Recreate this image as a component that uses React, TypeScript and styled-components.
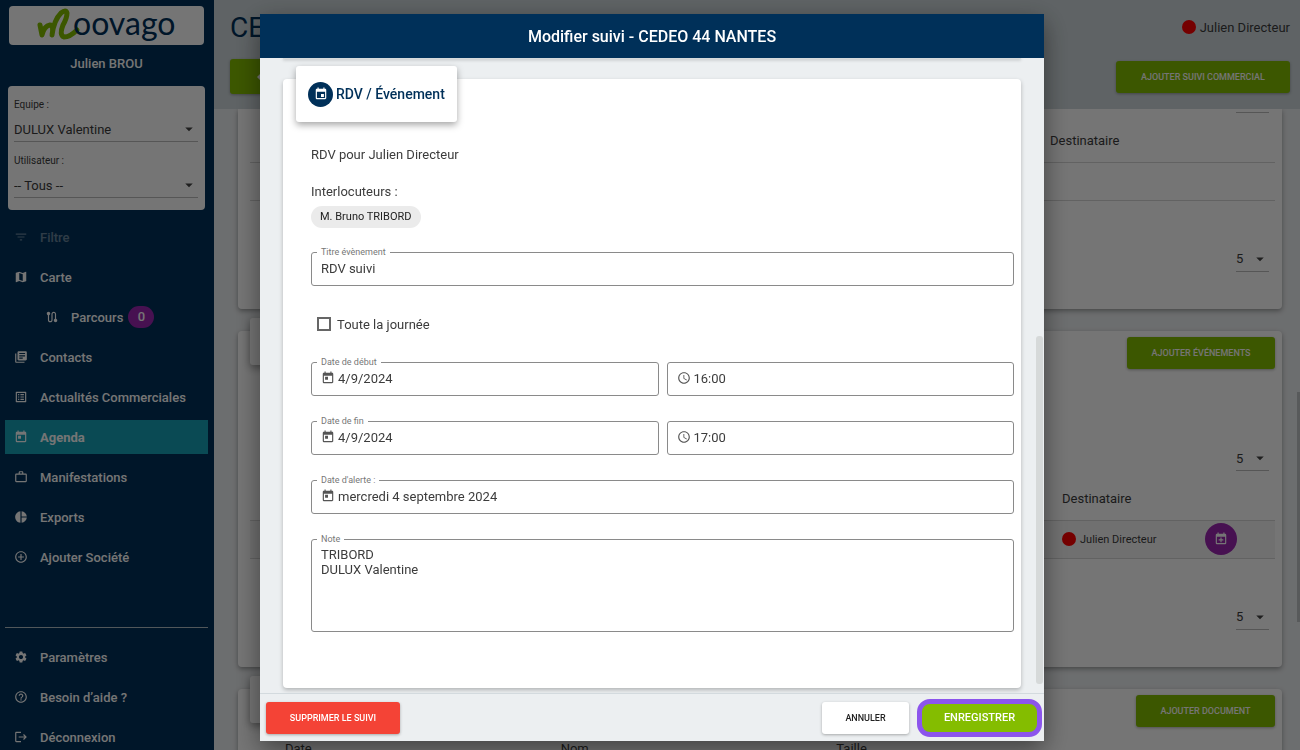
import React from 'react';
import styled, { createGlobalStyle } from 'styled-components';
import {
  MdAddCircleOutline,
  MdArrowBack,
  MdArrowDropDown,
  MdEvent,
  MdFilterList,
  MdHelpOutline,
  MdLibraryBooks,
  MdListAlt,
  MdLogout,
  MdMap,
  MdPieChart,
  MdRoute,
  MdSchedule,
  MdSettings,
  MdToday,
  MdWorkOutline,
} from 'react-icons/md';

const navy = '#003059';
const green = '#84bd00';
const surface = '#eceff1';

const GlobalStyle = createGlobalStyle`
  *, *::before, *::after { box-sizing: border-box; }
  body { margin: 0; }
  body, button, input, select, textarea {
    font-family: Roboto, 'Liberation Sans', sans-serif;
    font-size: 13px;
    color: #3c3c3c;
  }
`;

const Page = styled.div`
  display: flex;
  height: 100vh;
  overflow: hidden;
  background: ${surface};
`;

/* ---------- Sidebar ---------- */

const Sidebar = styled.aside`
  flex: 0 0 214px;
  display: flex;
  flex-direction: column;
  padding: 6px 6px 0 5px;
  background: ${navy};
  overflow: hidden;
`;

const LogoCard = styled.div`
  flex: none;
  display: flex;
  justify-content: center;
  height: 39px;
  margin: 0 4px;
  border-radius: 4px;
  background: #fff;
`;

const LogoDrawing = styled.svg`
  overflow: visible;
`;

const UserName = styled.div`
  flex: none;
  padding: 8px 0 12px;
  line-height: 21px;
  text-align: center;
  font-weight: 500;
  color: #fff;
`;

const FilterCard = styled.div`
  flex: none;
  height: 124px;
  margin: 0 3px 10px;
  padding: 11px 7px 0 6px;
  border-radius: 4px;
  background: #fff;
`;

const FilterLabel = styled.label`
  display: block;
  height: 16px;
  line-height: 16px;
  font-size: 10px;
`;

const SelectBox = styled.div<{ $gap?: number }>`
  position: relative;
  display: flex;
  align-items: center;
  height: 29px;
  padding-top: 4px;
  margin-bottom: ${(p) => p.$gap ?? 0}px;
  border-bottom: 1px solid #bbb;
  svg {
    position: absolute;
    right: 0;
    width: 18px;
    height: 18px;
    color: #444;
    pointer-events: none;
  }
`;

const Select = styled.select`
  width: 100%;
  padding: 0;
  border: 0;
  background: transparent;
  appearance: none;
  outline: none;
`;

const Nav = styled.nav`
  flex: none;
  display: flex;
  flex-direction: column;
  gap: 6px;
`;

const NavItem = styled.a<{ $active?: boolean; $muted?: boolean; $nested?: boolean }>`
  display: flex;
  align-items: center;
  gap: 12px;
  height: 34px;
  padding-left: ${(p) => (p.$nested ? 40 : 9)}px;
  background: ${(p) => (p.$active ? '#17a2b8' : 'transparent')};
  opacity: ${(p) => (p.$muted ? 0.4 : 1)};
  color: #fff;
  font-weight: ${(p) => (p.$active ? 700 : 500)};
  text-decoration: none;
  svg {
    width: 14px;
    height: 14px;
  }
`;

const Badge = styled.span`
  width: 26px;
  margin-left: -7px;
  border-radius: 11px;
  background: #9c27b0;
  line-height: 22px;
  text-align: center;
`;

const Divider = styled.hr`
  flex: none;
  width: 100%;
  margin: 53px 0 12px;
  border: 0;
  border-top: 1px solid #b0bec5;
`;

/* ---------- Page behind the dialog ---------- */

const Main = styled.main`
  flex: 1;
  min-width: 0;
  display: flex;
  flex-direction: column;
`;

const TopBar = styled.header`
  flex: none;
  height: 109px;
  padding: 0 10px 0 16px;
  background: #cfd8dc;
`;

const TopRow = styled.div<{ $height: number }>`
  display: flex;
  align-items: center;
  justify-content: space-between;
  height: ${(p) => p.$height}px;
`;

const Title = styled.h1`
  margin: 0;
  font-size: 28px;
  font-weight: 400;
  color: ${navy};
`;

const Person = styled.span<{ $small?: boolean }>`
  display: flex;
  align-items: center;
  gap: 4px;
  font-size: ${(p) => (p.$small ? 11 : 13)}px;
  &::before {
    content: '';
    width: 14px;
    height: 14px;
    border-radius: 50%;
    background: #f00;
  }
`;

const Button = styled.button<{ $width: number; $tone?: 'green' | 'red' | 'white' }>`
  flex: none;
  width: ${(p) => p.$width}px;
  height: 32px;
  padding: 0;
  border: 0;
  border-radius: 3px;
  background: ${(p) => (p.$tone === 'red' ? '#f44336' : p.$tone === 'white' ? '#fff' : green)};
  color: ${(p) => (p.$tone === 'white' ? '#222' : '#fff')};
  font-size: 9px;
  font-weight: 500;
  white-space: nowrap;
  box-shadow: 0 1px 3px rgba(0, 0, 0, 0.3);
`;

const BackButton = styled.button`
  display: flex;
  align-items: center;
  justify-content: center;
  width: 66px;
  height: 35px;
  padding: 0;
  border: 0;
  border-radius: 3px;
  background: ${green};
  color: #fff;
  box-shadow: 0 1px 3px rgba(0, 0, 0, 0.3);
`;

const Content = styled.div`
  flex: 1;
  min-height: 0;
  position: relative;
  display: flex;
  flex-direction: column;
  gap: 22px;
  padding: 0 18px 0 24px;
  overflow: hidden;
`;

const Card = styled.section<{ $height: number; $first?: boolean }>`
  flex: none;
  position: relative;
  height: ${(p) => p.$height}px;
  padding: ${(p) => (p.$first ? 0 : 6)}px 7px 0 12px;
  border-radius: ${(p) => (p.$first ? '0 0 4px 4px' : '4px')};
  background: #fff;
  box-shadow: 0 2px 5px rgba(0, 0, 0, 0.35);
`;

const CardTab = styled.div`
  position: absolute;
  top: -13px;
  left: 12px;
  width: 150px;
  height: 47px;
  border-radius: 3px;
  background: #fff;
  box-shadow: 0 3px 8px rgba(0, 0, 0, 0.4);
`;

const CardActions = styled.div`
  display: flex;
  justify-content: flex-end;
`;

const PageSize = styled.div<{ $top: number }>`
  width: 33px;
  margin: ${(p) => p.$top}px 6px 0 auto;
`;

const Table = styled.table<{ $top: number }>`
  width: 100%;
  margin-top: ${(p) => p.$top}px;
  border-collapse: collapse;
  table-layout: fixed;
`;

const Th = styled.th<{ $width?: number }>`
  width: ${(p) => (p.$width ? `${p.$width}px` : 'auto')};
  height: 42px;
  padding: 0;
  border-bottom: 1px solid #d5d5d5;
  font-weight: 400;
  text-align: left;
`;

const Td = styled.td<{ $shaded?: boolean }>`
  height: 38px;
  padding: 0;
  border-bottom: 1px solid #d5d5d5;
  background: ${(p) => (p.$shaded ? '#f5f5f5' : 'transparent')};
`;

const RoundButton = styled.button`
  display: flex;
  align-items: center;
  justify-content: center;
  width: 32px;
  height: 32px;
  padding: 0;
  border: 0;
  border-radius: 50%;
  background: #9c27b0;
  color: #fff;
`;

const PageScroll = styled.div`
  position: absolute;
  top: 283px;
  right: 0;
  width: 3px;
  height: 230px;
  background: #bfc4c6;
`;

/* ---------- Dialog ---------- */

const Overlay = styled.div`
  position: fixed;
  inset: 0;
  display: flex;
  padding: 14px 256px 9px 260px;
  background: rgba(0, 0, 0, 0.54);
`;

const Dialog = styled.div`
  flex: 1;
  min-width: 0;
  display: flex;
  flex-direction: column;
  background: ${surface};
  box-shadow: 0 8px 24px rgba(0, 0, 0, 0.45);
`;

const DialogTitle = styled.h2`
  flex: none;
  height: 44px;
  margin: 0;
  background: ${navy};
  color: #fff;
  font-size: 16px;
  font-weight: 500;
  line-height: 46px;
  text-align: center;
`;

const DialogBody = styled.div`
  flex: 1;
  min-height: 0;
  position: relative;
  padding: 0 23px;
  overflow: hidden;
`;

const PreviousCardEdge = styled.div`
  height: 1px;
  margin-bottom: 20px;
  background: #d5d9db;
  box-shadow: 0 1px 3px rgba(0, 0, 0, 0.35);
`;

const FormCard = styled.form`
  position: relative;
  display: flex;
  flex-direction: column;
  height: 609px;
  padding: 66px 7px 0 28px;
  border-radius: 4px;
  background: #fff;
  box-shadow: 0 2px 4px rgba(0, 0, 0, 0.25);
`;

const FormTab = styled.div`
  position: absolute;
  top: -13px;
  left: 13px;
  display: flex;
  align-items: center;
  gap: 3px;
  height: 56px;
  padding: 0 12px;
  border-radius: 3px;
  background: #fff;
  box-shadow: 0 3px 7px rgba(0, 0, 0, 0.35);
  color: ${navy};
  font-size: 14px;
  font-weight: 500;
  white-space: nowrap;
`;

const TabIcon = styled.span`
  display: flex;
  align-items: center;
  justify-content: center;
  width: 25px;
  height: 25px;
  border-radius: 50%;
  background: ${navy};
  color: #fff;
`;

const Line = styled.div<{ $after: number }>`
  line-height: 20px;
  margin-bottom: ${(p) => p.$after}px;
`;

const Chip = styled.span`
  align-self: flex-start;
  margin-bottom: 24px;
  padding: 0 9px;
  border-radius: 11px;
  background: #ebebeb;
  color: #222;
  font-size: 11px;
  line-height: 22px;
`;

const Field = styled.div<{ $tall?: boolean }>`
  position: relative;
  display: flex;
  align-items: ${(p) => (p.$tall ? 'stretch' : 'center')};
  gap: 3px;
  height: ${(p) => (p.$tall ? 93 : 34)}px;
  padding: ${(p) => (p.$tall ? '7px 9px' : '0 9px 2px')};
  border: 1px solid #8a8a8a;
  border-radius: 3px;
  svg {
    flex: none;
    width: 14px;
    height: 14px;
    color: #555;
  }
`;

const FieldLabel = styled.label`
  position: absolute;
  top: -7px;
  left: 5px;
  padding: 0 4px;
  background: #fff;
  color: #777;
  font-size: 9px;
  line-height: 12px;
`;

const Input = styled.input`
  flex: 1;
  min-width: 0;
  padding: 0;
  border: 0;
  outline: none;
  background: transparent;
`;

const TextArea = styled.textarea`
  flex: 1;
  padding: 0;
  border: 0;
  outline: none;
  resize: none;
  line-height: 15px;
`;

const Fields = styled.div`
  display: flex;
  flex-direction: column;
  gap: 25px;
`;

const FieldRow = styled.div`
  display: grid;
  grid-template-columns: 1fr 1fr;
  gap: 8px;
`;

const CheckLabel = styled.label`
  display: flex;
  align-items: center;
  gap: 6px;
  height: 20px;
  margin: 28px 0 28px 6px;
`;

const Checkbox = styled.input`
  width: 14px;
  height: 14px;
  margin: 0;
  border: 2px solid #666;
  appearance: none;
`;

const DialogScroll = styled.div`
  position: absolute;
  right: 1px;
  bottom: 9px;
  width: 7px;
  height: 348px;
  border-radius: 3px;
  background: #d6d9d9;
`;

const DialogFooter = styled.footer`
  flex: none;
  display: flex;
  align-items: center;
  gap: 8px;
  height: 48px;
  padding: 0 2px 0 6px;
  border-top: 1px solid #d3dade;
`;

const Spacer = styled.div`
  flex: 1;
`;

const SaveButton = styled.button`
  width: 125px;
  height: 38px;
  padding: 0;
  border: 5px solid #8c55ec;
  border-radius: 13px;
  background: ${green};
  color: #fff;
  font-size: 11px;
  font-weight: 500;
`;

function Logo() {
  return (
    <LogoDrawing width="144" height="39" viewBox="0 0 144 39" role="img" aria-label="Moovago">
      <path
        d="M5 19 L7 29 Q9 20 15 19 Q19 19 17 29 Q19 14 26 7 Q31 3 32 7 Q32 12 28 19 Q24 29 29 31 Q35 31 42 24"
        fill="none"
        stroke={green}
        strokeWidth="5"
        strokeLinecap="round"
        strokeLinejoin="round"
      />
      <text x="38" y="29" fontFamily="Lato, sans-serif" fontSize="32" fontWeight="400" fill={navy}>
        oovago
      </text>
    </LogoDrawing>
  );
}

function CalendarPlus() {
  return (
    <svg width="14" height="14" viewBox="0 0 24 24" fill="currentColor">
      <path d="M19 19V8H5v11h14M16 1h2v2h1a2 2 0 0 1 2 2v14a2 2 0 0 1-2 2H5a2 2 0 0 1-2-2V5a2 2 0 0 1 2-2h1V1h2v2h8V1m-5 8.500h2v3h3v2h-3v3h-2v-3H8v-2h3v-3z" />
    </svg>
  );
}

function Paging({ top }: { top: number }) {
  return (
    <PageSize $top={top}>
      <SelectBox>
        <Select aria-label="Lignes par page" defaultValue="5">
          <option>5</option>
        </Select>
        <MdArrowDropDown />
      </SelectBox>
    </PageSize>
  );
}

export default function App() {
  return (
    <>
      <GlobalStyle />
      <Page>
        <Sidebar>
          <LogoCard>
            <Logo />
          </LogoCard>
          <UserName>Julien BROU</UserName>
          <FilterCard>
            <FilterLabel htmlFor="team">Equipe :</FilterLabel>
            <SelectBox $gap={11}>
              <Select id="team" defaultValue="DULUX Valentine">
                <option>DULUX Valentine</option>
              </Select>
              <MdArrowDropDown />
            </SelectBox>
            <FilterLabel htmlFor="user">Utilisateur :</FilterLabel>
            <SelectBox>
              <Select id="user" defaultValue="-- Tous --">
                <option>-- Tous --</option>
              </Select>
              <MdArrowDropDown />
            </SelectBox>
          </FilterCard>
          <Nav>
            <NavItem href="#" $muted><MdFilterList />Filtre</NavItem>
            <NavItem href="#"><MdMap />Carte</NavItem>
            <NavItem href="#" $nested><MdRoute />Parcours<Badge>0</Badge></NavItem>
            <NavItem href="#"><MdLibraryBooks />Contacts</NavItem>
            <NavItem href="#"><MdListAlt />Actualités Commerciales</NavItem>
            <NavItem href="#" $active><MdToday />Agenda</NavItem>
            <NavItem href="#"><MdWorkOutline />Manifestations</NavItem>
            <NavItem href="#"><MdPieChart />Exports</NavItem>
            <NavItem href="#"><MdAddCircleOutline />Ajouter Société</NavItem>
          </Nav>
          <Divider />
          <Nav>
            <NavItem href="#"><MdSettings />Paramètres</NavItem>
            <NavItem href="#"><MdHelpOutline />Besoin d’aide ?</NavItem>
            <NavItem href="#"><MdLogout />Déconnexion</NavItem>
          </Nav>
        </Sidebar>

        <Main>
          <TopBar>
            <TopRow $height={54}>
              <Title>CEDEO 44 NANTES</Title>
              <Person>Julien Directeur</Person>
            </TopRow>
            <TopRow $height={45}>
              <BackButton type="button" aria-label="Retour"><MdArrowBack size={18} /></BackButton>
              <Button type="button" $width={174}>AJOUTER SUIVI COMMERCIAL</Button>
            </TopRow>
          </TopBar>
          <Content>
            <Card $height={200} $first>
              <PageSize $top={-25}><SelectBox /></PageSize>
              <Table $top={7}>
                <thead>
                  <tr><Th /><Th $width={225}>Destinataire</Th></tr>
                </thead>
                <tbody>
                  <tr><Td /><Td /></tr>
                </tbody>
              </Table>
              <Paging top={42} />
            </Card>
            <Card $height={336}>
              <CardTab />
              <CardActions>
                <Button type="button" $width={148}>AJOUTER ÉVÉNEMENTS</Button>
              </CardActions>
              <Paging top={73} />
              <Table $top={7}>
                <thead>
                  <tr><Th /><Th $width={143}>Destinataire</Th><Th $width={70} /></tr>
                </thead>
                <tbody>
                  <tr>
                    <Td $shaded />
                    <Td $shaded><Person $small>Julien Directeur</Person></Td>
                    <Td $shaded>
                      <RoundButton type="button" aria-label="Ajouter au calendrier"><CalendarPlus /></RoundButton>
                    </Td>
                  </tr>
                </tbody>
              </Table>
              <Paging top={42} />
            </Card>
            <Card $height={200}>
              <CardTab />
              <CardActions>
                <Button type="button" $width={139}>AJOUTER DOCUMENT</Button>
              </CardActions>
              <Table $top={1}>
                <thead>
                  <tr><Th $width={35} /><Th>Date</Th><Th>Nom</Th><Th>Taille</Th><Th $width={163} /></tr>
                </thead>
              </Table>
            </Card>
            <PageScroll />
          </Content>
        </Main>
      </Page>

      <Overlay>
        <Dialog role="dialog" aria-modal="true" aria-labelledby="dialog-title">
          <DialogTitle id="dialog-title">Modifier suivi - CEDEO 44 NANTES</DialogTitle>
          <DialogBody>
            <PreviousCardEdge />
            <FormCard>
              <FormTab>
                <TabIcon><MdEvent size={14} /></TabIcon>
                RDV / Événement
              </FormTab>
              <Line $after={17}>RDV pour Julien Directeur</Line>
              <Line $after={4}>Interlocuteurs :</Line>
              <Chip>M. Bruno TRIBORD</Chip>
              <Field>
                <FieldLabel htmlFor="title">Titre évènement</FieldLabel>
                <Input id="title" defaultValue="RDV suivi" />
              </Field>
              <CheckLabel>
                <Checkbox type="checkbox" />
                Toute la journée
              </CheckLabel>
              <Fields>
                <FieldRow>
                  <Field>
                    <FieldLabel htmlFor="start-date">Date de début</FieldLabel>
                    <MdToday />
                    <Input id="start-date" defaultValue="4/9/2024" />
                  </Field>
                  <Field>
                    <MdSchedule />
                    <Input aria-label="Heure de début" defaultValue="16:00" />
                  </Field>
                </FieldRow>
                <FieldRow>
                  <Field>
                    <FieldLabel htmlFor="end-date">Date de fin</FieldLabel>
                    <MdToday />
                    <Input id="end-date" defaultValue="4/9/2024" />
                  </Field>
                  <Field>
                    <MdSchedule />
                    <Input aria-label="Heure de fin" defaultValue="17:00" />
                  </Field>
                </FieldRow>
                <Field>
                  <FieldLabel htmlFor="alert-date">Date d'alerte :</FieldLabel>
                  <MdToday />
                  <Input id="alert-date" defaultValue="mercredi 4 septembre 2024" />
                </Field>
                <Field $tall>
                  <FieldLabel htmlFor="note">Note</FieldLabel>
                  <TextArea id="note" defaultValue={'TRIBORD\nDULUX Valentine'} />
                </Field>
              </Fields>
            </FormCard>
            <DialogScroll />
          </DialogBody>
          <DialogFooter>
            <Button type="button" $width={134} $tone="red">SUPPRIMER LE SUIVI</Button>
            <Spacer />
            <Button type="button" $width={87} $tone="white">ANNULER</Button>
            <SaveButton type="button">ENREGISTRER</SaveButton>
          </DialogFooter>
        </Dialog>
      </Overlay>
    </>
  );
}
